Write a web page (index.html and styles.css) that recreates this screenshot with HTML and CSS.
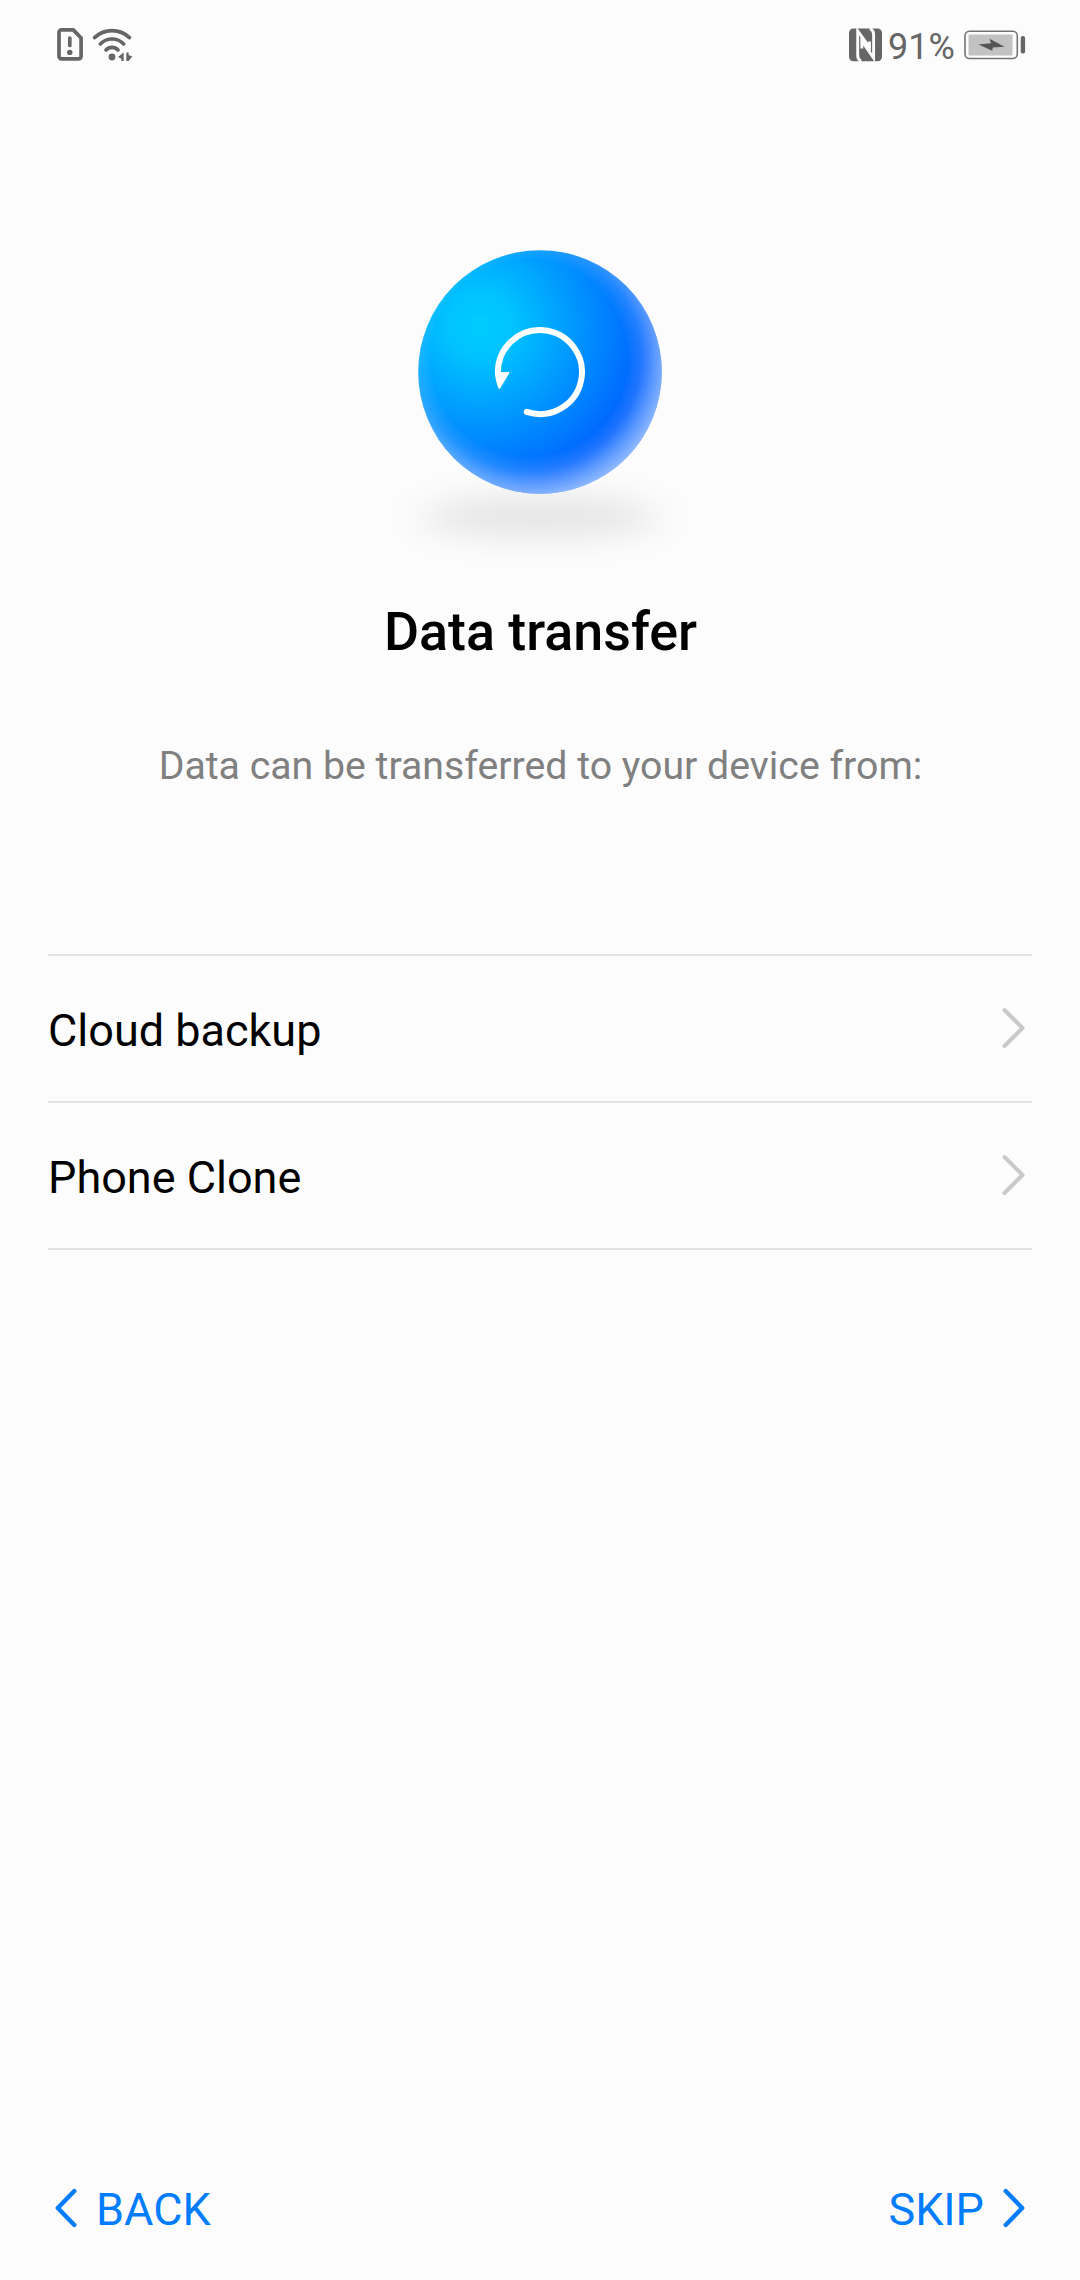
FILE: index.html
```html
<!DOCTYPE html>
<html lang="en">
<head>
<meta charset="utf-8">
<title>Data transfer</title>
<link rel="stylesheet" href="styles.css">
</head>
<body>
<div class="screen">
  <header class="status">
    <svg class="status-left" width="80" height="40" viewBox="56 26 80 40" fill="none" stroke="#666" stroke-width="3.7" stroke-linecap="round" stroke-linejoin="round">
      <path d="M61.5 29.9H73.3L81.1 38V56.3a2.5 2.5 0 0 1-2.5 2.5H61.5a2.5 2.5 0 0 1-2.5-2.5V32.4a2.5 2.5 0 0 1 2.5-2.5Z"/>
      <path d="M69.8 38V45.5"/>
      <circle cx="69.8" cy="52.4" r="2.7" fill="#666" stroke="none"/>
      <path d="M94.5 37.6Q102 30.6 112 30.6T129.5 37.6M100.3 44Q105 39 112 39T123.7 44M106 50Q108.5 47.3 112 47.3T118 50"/>
      <circle cx="112" cy="57" r="3.4" fill="#666" stroke="none"/>
      <path d="M118 57L123.7 52.5V61H121.3V58.8ZM126.3 52.5H128.6V55L132.3 56.6L128.6 61H126.3Z" fill="#666" stroke="none"/>
    </svg>
    <div class="status-right">
      <svg width="34" height="34" viewBox="849 28.5 34 34">
        <rect x="849" y="29" width="33" height="32.7" rx="4.5" fill="#666"/>
        <path d="M861 61.7Q857.7 60 857.7 56V31.5L869.5 47.5V42M861.8 49V41.5L873.6 58.5V35Q873.6 31 870 29" fill="none" stroke="#fcfcfc" stroke-width="2.9"/>
      </svg>
      <span class="percent">91%</span>
      <svg class="battery" width="62" height="30" viewBox="963.5 30.5 62 30">
        <rect x="964.5" y="31.7" width="52.3" height="27.3" rx="4.5" fill="none" stroke="#737373" stroke-width="1.6"/>
        <rect x="968" y="35" width="44" height="21" rx="1" fill="#c2c2c2"/>
        <path d="M978 45L990.5 43.8L989 39.3L1004 47.3L992.3 48L991.7 51.3Z" fill="#555"/>
        <rect x="1020.2" y="36.5" width="4.4" height="17.5" rx="2" fill="#666"/>
      </svg>
    </div>
  </header>
  <main class="content">
    <svg class="orb" width="320" height="340" viewBox="380 230 320 340">
      <defs>
        <radialGradient id="base" gradientUnits="userSpaceOnUse" cx="480" cy="325" r="170">
          <stop offset="0" stop-color="#00ccff"/>
          <stop offset=".2" stop-color="#00c2ff"/>
          <stop offset=".55" stop-color="#0098ff"/>
          <stop offset=".8" stop-color="#007aff"/>
          <stop offset="1" stop-color="#0060ff"/>
        </radialGradient>
        <radialGradient id="rim" gradientUnits="userSpaceOnUse" cx="529" cy="358" r="140">
          <stop offset=".7" stop-color="#fff" stop-opacity="0"/>
          <stop offset=".8" stop-color="#fff" stop-opacity=".13"/>
          <stop offset=".9" stop-color="#fff" stop-opacity=".36"/>
          <stop offset="1" stop-color="#fff" stop-opacity=".57"/>
        </radialGradient>
        <filter id="soft" x="-50%" y="-150%" width="200%" height="400%"><feGaussianBlur stdDeviation="20 15"/></filter>
      </defs>
      <ellipse cx="540" cy="517" rx="118" ry="21" fill="#000" fill-opacity=".09" filter="url(#soft)"/>
      <circle cx="540" cy="372" r="121.8" fill="url(#base)"/>
      <circle cx="540" cy="372" r="121.8" fill="url(#rim)"/>
      <path d="M526.7 411.9A42 42 0 1 0 498 374" fill="none" stroke="#fff" stroke-width="6" stroke-linecap="round"/>
      <path d="M495 372H508.5Q509.7 372 509.2 373.3L500.2 388.3Q499.3 389.4 498.4 388.3Q495 379 495 372Z" fill="#fff"/>
    </svg>
    <h1 class="title">Data transfer</h1>
    <p class="subtitle">Data can be transferred to your device from:</p>
    <ul class="options">
      <li class="option"><span>Cloud backup</span><svg class="chevron" width="24" height="42" viewBox="0 0 24 42"><path d="M2.5 3L20.5 21L2.5 39"/></svg></li>
      <li class="option"><span>Phone Clone</span><svg class="chevron" width="24" height="42" viewBox="0 0 24 42"><path d="M2.5 3L20.5 21L2.5 39"/></svg></li>
    </ul>
  </main>
  <footer class="actions">
    <a class="action"><svg class="arrow" width="22" height="40" viewBox="0 0 22 40"><path d="M19.3 3L2.8 20L19.3 37"/></svg><span>BACK</span></a>
    <a class="action"><span>SKIP</span><svg class="arrow" width="22" height="40" viewBox="0 0 22 40"><path d="M2.7 3L19.2 20L2.7 37"/></svg></a>
  </footer>
</div>
</body>
</html>
```
FILE: styles.css
```css
* { box-sizing: border-box; }
body { margin: 0; background: #fcfcfc; font-family: Roboto, sans-serif; }
svg { display: block; flex: none; }
.screen { width: 1080px; height: 2280px; display: flex; flex-direction: column; overflow: hidden; }
.status { height: 90px; padding: 26px 54px 0 56px; display: flex; justify-content: space-between; align-items: flex-start; color: #666; }
.status-right { display: flex; align-items: flex-start; padding-top: 2px; }
.percent { width: 81px; padding-left: 5px; font-size: 36px; line-height: 38px; white-space: nowrap; }
.battery { margin-top: 2px; }
.content { flex: 1; display: flex; flex-direction: column; align-items: center; padding: 140px 48px 0; }
.title { margin: 30px 0 0 1px; font-size: 53.8px; line-height: 64px; font-weight: 500; color: #000; }
.subtitle { margin: 79px 0 0 1px; font-size: 39.25px; line-height: 46px; color: #808080; white-space: nowrap; }
.options { width: 100%; margin: 165px 0 0; padding: 0; list-style: none; border-top: 2px solid #e3e3e3; }
.option { height: 147px; padding: 4px 6px 0 0; display: flex; justify-content: space-between; align-items: center; border-bottom: 2px solid #e3e3e3; font-size: 45px; line-height: 54px; color: #000; }
.chevron { margin-bottom: 5px; fill: none; stroke: #c9c9c9; stroke-width: 4; stroke-linecap: round; stroke-linejoin: round; }
.actions { height: 142px; padding: 45px 55px 0 55px; display: flex; justify-content: space-between; align-items: flex-start; }
.action { display: flex; align-items: center; gap: 19px; font-size: 45px; line-height: 54px; color: #007dff; }
.arrow { margin-bottom: 5px; fill: none; stroke: #007dff; stroke-width: 4.4; stroke-linecap: round; stroke-linejoin: round; }
```
